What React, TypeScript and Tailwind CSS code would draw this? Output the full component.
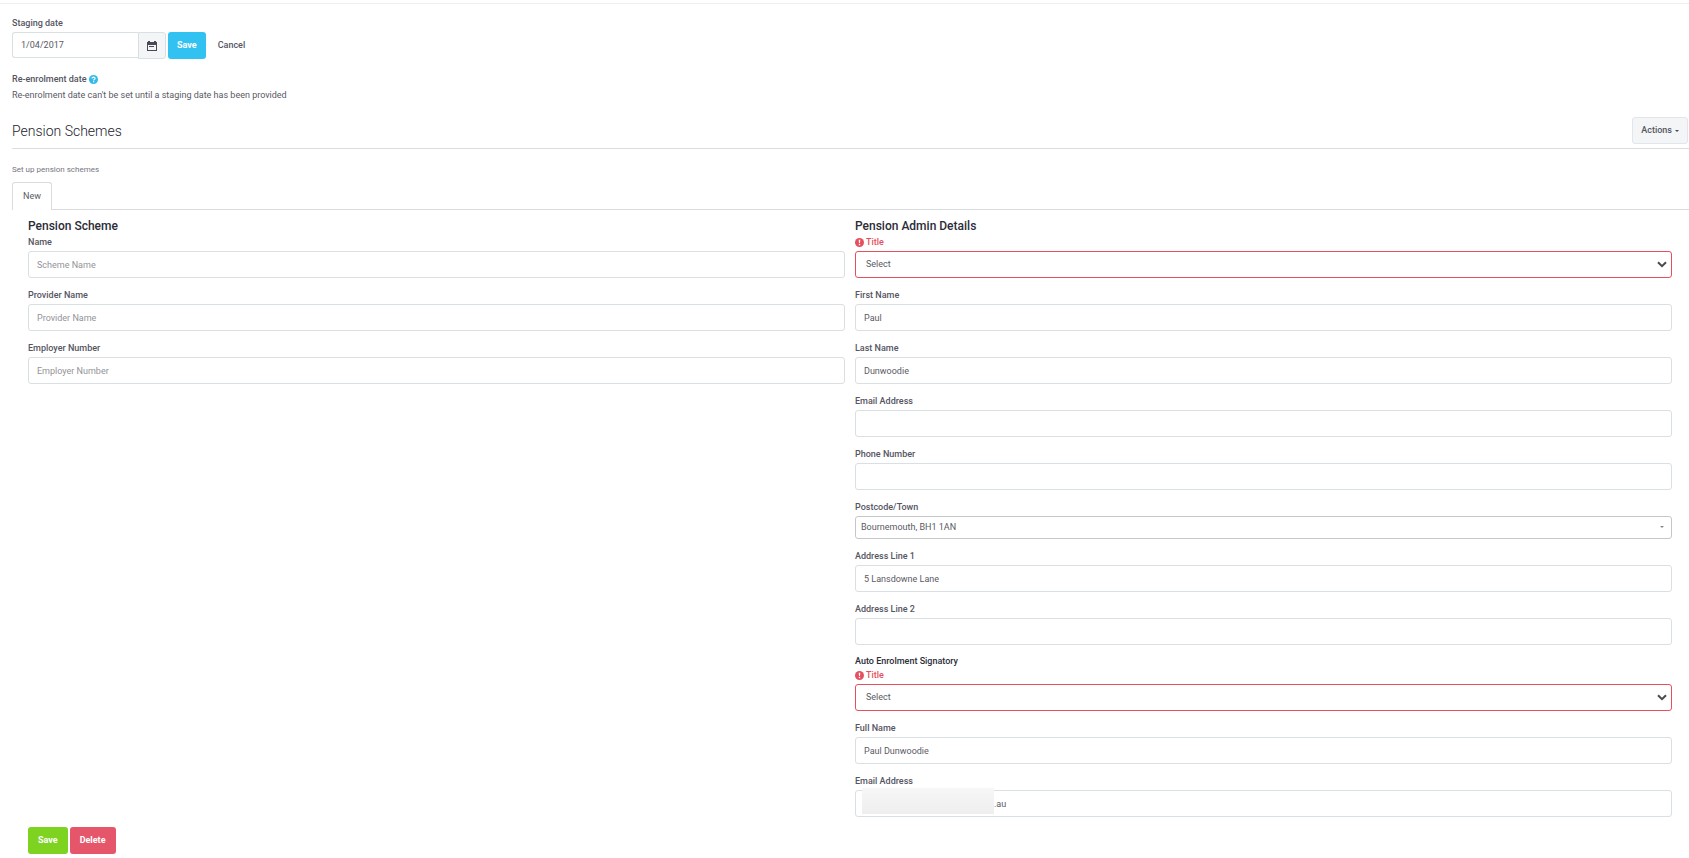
import React, { useState } from 'react';

const inputClass =
  'block w-full h-[27px] rounded-[3px] border border-[#d9e0e3] bg-white px-2 text-[9px] text-[#5a5a64] placeholder:text-[#939399] outline-none focus:border-[#31c2f2]';

const labelClass = 'block mb-[2px] text-[9px] leading-[14px] font-medium text-[#555562]';

interface TextFieldProps {
  id: string;
  label: string;
  defaultValue?: string;
  placeholder?: string;
}

const TextField: React.FC<TextFieldProps> = ({ id, label, defaultValue, placeholder }) => (
  <div className="mb-[10px]">
    <label htmlFor={id} className={labelClass}>
      {label}
    </label>
    <input id={id} type="text" defaultValue={defaultValue} placeholder={placeholder} className={inputClass} />
  </div>
);

const TitleSelect: React.FC<{ id: string }> = ({ id }) => (
  <div className="mb-[10px]">
    <label
      htmlFor={id}
      className="mb-[2px] flex items-center gap-[2px] text-[9px] leading-[14px] font-medium text-[#e5505f]"
    >
      <svg className="h-[9px] w-[9px]" viewBox="0 0 16 16" aria-hidden="true">
        <circle cx="8" cy="8" r="8" fill="#e5505f" />
        <path d="M6.6 3h2.8l-.5 6H7.1z" fill="#fff" />
        <rect x="6.8" y="10.4" width="2.4" height="2.4" fill="#fff" />
      </svg>
      Title
    </label>
    <div className="relative">
      <select
        id={id}
        className="block h-[27px] w-full appearance-none rounded-[3px] border border-[#e5505f] bg-white px-[10px] text-[9px] text-[#5a5a64] outline-none"
      >
        <option>Select</option>
        <option>Mr</option>
        <option>Mrs</option>
        <option>Miss</option>
        <option>Ms</option>
      </select>
      <svg
        className="pointer-events-none absolute top-[10px] right-[5px] h-[7px] w-[10px]"
        viewBox="0 0 10 7"
        fill="none"
        stroke="#4a4a4a"
        strokeWidth="2"
        aria-hidden="true"
      >
        <path d="M1 1.2l4 4 4-4" />
      </svg>
    </div>
  </div>
);

const App: React.FC = () => {
  const [stagingDate, setStagingDate] = useState('1/04/2017');

  return (
    <div className="min-h-screen bg-white pt-[3px] font-[Roboto,sans-serif] text-[9px] text-[#5a5a64]">
      <div className="border-t border-[#eeeeee] pl-3">
        <section className="pt-3">
          <label htmlFor="staging-date" className={labelClass}>
            Staging date
          </label>
          <div className="flex items-start">
            <input
              id="staging-date"
              type="text"
              value={stagingDate}
              onChange={(e) => setStagingDate(e.target.value)}
              className="h-[26px] w-[126px] rounded-l-[3px] border border-r-0 border-[#d9e0e3] px-2 text-[9px] outline-none"
            />
            <button
              type="button"
              aria-label="Open calendar"
              className="flex h-[27px] w-[28px] items-center justify-center rounded-r-[3px] border border-[#d9e0e3] bg-[#f3f5f7]"
            >
              <svg className="h-[10px] w-[10px]" viewBox="0 0 10 10" fill="#4a4a57" aria-hidden="true">
                <path d="M1 0h2v1h4V0h2v1h1v9H0V1h1zM1 4v5h8V4z" fillRule="evenodd" />
                <rect x="2" y="5" width="5" height="1" />
              </svg>
            </button>
            <button
              type="button"
              className="ml-[2px] h-[27px] rounded-[3px] bg-[#31c2f2] px-[9px] text-[9px] font-bold text-white"
            >
              Save
            </button>
            <button type="button" className="ml-[2px] h-[27px] px-[10px] text-[9px] font-medium text-[#555562]">
              Cancel
            </button>
          </div>
        </section>

        <section className="pt-[13px]">
          <h3 className="flex items-center gap-[2px] text-[9px] leading-[14px] font-medium text-[#555562]">
            Re-enrolment date
            <svg className="h-[9px] w-[9px]" viewBox="0 0 16 16" aria-hidden="true">
              <circle cx="8" cy="8" r="8" fill="#31b9ea" />
              <path d="M5.3 6.2C5.3 2.8 10.8 3 10.8 6c0 1.9-2.6 1.900-2.600 3.600" fill="none" stroke="#fff" strokeWidth="2" />
              <rect x="7.1" y="10.9" width="2.2" height="2.2" fill="#fff" />
            </svg>
          </h3>
          <p className="mt-[2px] leading-[14px]">
            Re-enrolment date can't be set until a staging date has been provided
          </p>
        </section>

        <header className="mt-[15px] flex h-8 items-start justify-between border-b border-[#dddddd]">
          <h2 className="text-[14px] leading-[28px] font-light text-[#22222d]">Pension Schemes</h2>
          <button
            type="button"
            className="mr-px flex h-[27px] items-center gap-[3px] rounded-[3px] border border-[#e1e5ec] bg-[#f3f5f7] px-2 text-[9px] font-medium text-[#555562]"
          >
            Actions
            <span className="border-x-2 border-t-2 border-x-transparent border-t-[#4a4a57]" />
          </button>
        </header>

        <p className="mt-[15px] text-[8px] leading-[12px] text-[#75757f]">Set up pension schemes</p>

        <nav className="mt-[6px] flex border-b border-[#d9dbdd]">
          <a
            href="#new"
            className="-mb-px h-[28px] rounded-t-[3px] border border-b-0 border-[#d9dbdd] bg-white px-[10px] text-[9px] leading-[26px]"
          >
            New
          </a>
        </nav>

        <form className="pt-2 pr-[17px] pl-4" onSubmit={(e) => e.preventDefault()}>
          <div className="grid grid-cols-2 gap-[10px]">
            <section>
              <h4 className="text-[12px] leading-[17px] font-medium text-[#2c2c38]">Pension Scheme</h4>
              <TextField id="scheme-name" label="Name" placeholder="Scheme Name" />
              <TextField id="provider-name" label="Provider Name" placeholder="Provider Name" />
              <TextField id="employer-number" label="Employer Number" placeholder="Employer Number" />
            </section>

            <section>
              <h4 className="text-[12px] leading-[17px] font-medium text-[#2c2c38]">Pension Admin Details</h4>
              <TitleSelect id="admin-title" />
              <TextField id="first-name" label="First Name" defaultValue="Paul" />
              <TextField id="last-name" label="Last Name" defaultValue="Dunwoodie" />
              <TextField id="admin-email" label="Email Address" />
              <TextField id="phone" label="Phone Number" />
              <div className="mb-[10px]">
                <label htmlFor="postcode" className={labelClass}>
                  Postcode/Town
                </label>
                <div className="relative">
                  <select
                    id="postcode"
                    className="block h-[23px] w-full appearance-none rounded-[3px] border border-[#c4c6c8] bg-white px-[5px] text-[9px] outline-none"
                  >
                    <option>Bournemouth, BH1 1AN</option>
                  </select>
                  <span className="pointer-events-none absolute top-[10px] right-2 border-x-2 border-t-2 border-x-transparent border-t-[#888888]" />
                </div>
              </div>
              <TextField id="address-1" label="Address Line 1" defaultValue="5 Lansdowne Lane" />
              <TextField id="address-2" label="Address Line 2" />
              <h5 className="text-[9px] leading-[13px] font-medium text-[#2c2c38]">Auto Enrolment Signatory</h5>
              <TitleSelect id="signatory-title" />
              <TextField id="full-name" label="Full Name" defaultValue="Paul Dunwoodie" />
              <div className="mb-[10px]">
                <label htmlFor="signatory-email" className={labelClass}>
                  Email Address
                </label>
                <div className="relative">
                  <input
                    id="signatory-email"
                    type="text"
                    defaultValue=".au"
                    className="block h-[27px] w-full rounded-[3px] border border-[#d9e0e3] pr-2 pl-[138px] text-[9px] outline-none"
                  />
                  <span className="pointer-events-none absolute -top-[2px] left-[7px] h-[26px] w-[132px] bg-linear-to-b from-[#f7f7f7] to-[#efeeee]" />
                </div>
              </div>
            </section>
          </div>

          <div className="flex gap-[2px]">
            <button type="submit" className="h-[27px] rounded-[3px] bg-[#7ed321] px-[10px] text-[9px] font-bold text-white">
              Save
            </button>
            <button type="button" className="h-[27px] rounded-[3px] bg-[#e5566a] px-[10px] text-[9px] font-bold text-white">
              Delete
            </button>
          </div>
        </form>
      </div>
    </div>
  );
};

export default App;
